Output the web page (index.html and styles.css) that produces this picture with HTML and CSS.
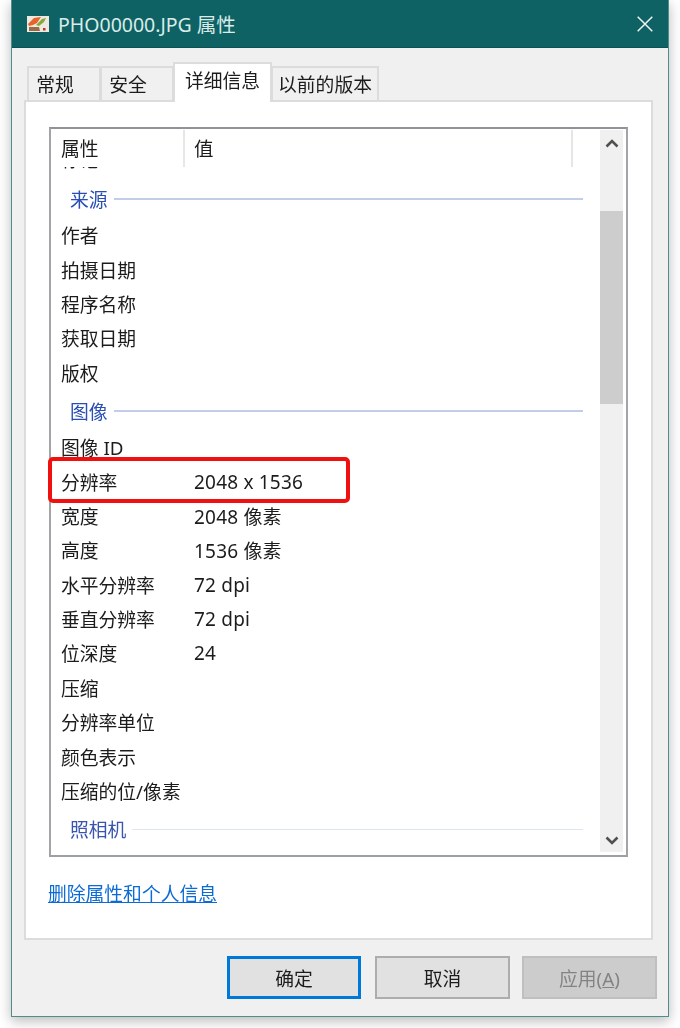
FILE: index.html
```html
<!DOCTYPE html>
<html lang="zh">
<head>
<meta charset="utf-8">
<title>PHO00000.JPG 属性</title>
<link rel="stylesheet" href="styles.css">
</head>
<body>
<div class="window">
  <header class="titlebar">
    <svg class="file-icon" width="22" height="16" viewBox="0 0 22 16">
      <rect width="22" height="16" fill="#eeeae0"/>
      <path d="M1 8 L7 2 L14 1 L10 7 L6 9 L2 10 Z" fill="#e8622c"/>
      <path d="M9 9 L15 3 L19 2 L17 6 L12 10 Z" fill="#84a93f"/>
      <path d="M2 11 L12 11 L13 15 L2 15 Z" fill="#9c6a45"/>
      <rect x="16" y="12" width="2.5" height="2.5" fill="#c4342c"/>
    </svg>
    <span class="title">PHO00000.JPG 属性</span>
    <svg class="close" width="16" height="16" viewBox="0 0 16 16">
      <path d="M0.7 0.7 L15.3 15.3 M15.3 0.7 L0.7 15.3" stroke="#eef5f4" stroke-width="1.5" fill="none"/>
    </svg>
  </header>
  <main class="content">
    <nav class="tabs">
      <div class="tab tab-side">常规</div>
      <div class="tab tab-side">安全</div>
      <div class="tab tab-active">详细信息</div>
      <div class="tab tab-d">以前的版本</div>
    </nav>
    <section class="panel">
      <div class="listbox">
        <div class="list">
          <div class="list-head">
            <div class="head-cell head-name">属性</div>
            <div class="head-cell head-value">值</div>
            <div class="head-cell head-rest"></div>
          </div>
          <div class="list-body">
            <div class="row row-clipped"><span class="name">标记</span></div>
            <div class="group"><span>来源</span><i></i></div>
            <div class="row"><span class="name">作者</span></div>
            <div class="row"><span class="name">拍摄日期</span></div>
            <div class="row"><span class="name">程序名称</span></div>
            <div class="row"><span class="name">获取日期</span></div>
            <div class="row"><span class="name">版权</span></div>
            <div class="group group-mid"><span>图像</span><i></i></div>
            <div class="row"><span class="name">图像 ID</span></div>
            <div class="row"><span class="name">分辨率</span><span class="value">2048 x 1536</span></div>
            <div class="row"><span class="name">宽度</span><span class="value">2048 像素</span></div>
            <div class="row"><span class="name">高度</span><span class="value">1536 像素</span></div>
            <div class="row"><span class="name">水平分辨率</span><span class="value">72 dpi</span></div>
            <div class="row"><span class="name">垂直分辨率</span><span class="value">72 dpi</span></div>
            <div class="row"><span class="name">位深度</span><span class="value">24</span></div>
            <div class="row"><span class="name">压缩</span></div>
            <div class="row"><span class="name">分辨率单位</span></div>
            <div class="row"><span class="name">颜色表示</span></div>
            <div class="row"><span class="name">压缩的位/像素</span></div>
            <div class="group group-mid group-faint"><span>照相机</span><i></i></div>
          </div>
        </div>
        <div class="scrollbar">
          <svg class="arrow" width="14" height="9" viewBox="0 0 14 9"><path d="M1.5 7.5 L7 2 L12.5 7.5" stroke="#505050" stroke-width="2.6" fill="none"/></svg>
          <div class="track"><div class="thumb"></div></div>
          <svg class="arrow arrow-down" width="14" height="9" viewBox="0 0 14 9"><path d="M1.5 1.5 L7 7 L12.5 1.5" stroke="#505050" stroke-width="2.6" fill="none"/></svg>
        </div>
        <div class="highlight"></div>
      </div>
      <a class="link" href="#">删除属性和个人信息</a>
    </section>
    <footer class="buttons">
      <button class="btn btn-default" type="button">确定</button>
      <button class="btn" type="button">取消</button>
      <button class="btn btn-disabled" type="button">应用(<u>A</u>)</button>
    </footer>
  </main>
</div>
</body>
</html>
```
FILE: styles.css
```css
* { box-sizing: border-box; }
html, body { margin: 0; height: 100%; }
body {
  width: 680px;
  height: 1028px;
  overflow: hidden;
  background: #ffffff;
  padding-left: 11px;
  font-family: "Noto Sans", "Noto Sans CJK SC", sans-serif;
  font-size: 18.8px;
  color: #1c1c1c;
}
.window {
  width: 658px;
  height: 1017px;
  display: flex;
  flex-direction: column;
  border: 1px solid #4d8f8d;
  border-top: 0;
  box-shadow: 0 4px 12px rgba(0, 0, 0, 0.28);
  background: #f0f0f0;
  filter: blur(0.35px);
}
.titlebar {
  height: 48px;
  flex: none;
  display: flex;
  align-items: center;
  padding: 0 15px 0 15px;
  background: #0e6263;
  color: #d9ecea;
  border-bottom: 1px solid #0a5253;
}
.file-icon { flex: none; }
.title { margin-left: 9px; font-size: 19.5px; }
.close { margin-left: auto; }
.content {
  flex: 1;
  display: flex;
  flex-direction: column;
  padding: 13px 15px 17px 12px;
  min-height: 0;
}
.tabs {
  display: flex;
  align-items: flex-end;
  height: 39px;
  padding-left: 3px;
  flex: none;
  position: relative;
  z-index: 1;
}
.tab {
  height: 34px;
  display: flex;
  align-items: center;
  justify-content: center;
  background: #f0f0f0;
  border: 2px solid #dcdcdc;
  border-bottom: 0;
  margin-right: -1px;
  white-space: nowrap;
}
.tab-side { width: 74px; padding-right: 18px; }
.tab-active {
  width: 99px;
  height: 40px;
  margin-bottom: -2px;
  padding-bottom: 6px;
  background: #fff;
  position: relative;
  z-index: 2;
}
.tab-d { width: 108px; }
.panel {
  flex: 1;
  min-height: 0;
  background: #fff;
  border: 2px solid #dcdcdc;
  padding: 25px 23px 0 23px;
}
.listbox {
  position: relative;
  height: 730px;
  display: flex;
  border: 2px solid #9c9fa3;
  border-color: #8f9296 #a2a4a7 #9c9fa3 #a2a4a7;
  padding: 1px 3px 3px 0;
}
.list {
  flex: 1;
  min-width: 0;
  display: flex;
  flex-direction: column;
}
.list-head {
  height: 37px;
  flex: none;
  display: flex;
}
.head-cell {
  padding: 0 0 2px 10px;
  display: flex;
  align-items: center;
  border-right: 2px solid #e6e6e6;
}
.head-name { width: 134px; }
.head-value { width: 388px; padding-left: 9px; font-size: 19.5px; }
.head-rest { flex: 1; border-right: 0; }
.list-body {
  flex: 1;
  min-height: 0;
  overflow: hidden;
}
.row {
  height: 34.4px;
  display: flex;
  align-items: center;
  padding-left: 10px;
  white-space: nowrap;
}
.row-clipped { margin-top: -27px; height: 40px; padding-bottom: 3px; }
.name { width: 133px; flex: none; }
.value { font-size: 19px; letter-spacing: 0.2px; }
.group {
  height: 38px;
  display: flex;
  align-items: center;
  padding-left: 19px;
  padding-right: 17px;
  gap: 6px;
  color: #2a4fb3;
  white-space: nowrap;
}
.group i {
  flex: 1;
  height: 1.5px;
  background: #c2cdeb;
}
.group-mid { margin-top: 2px; }
.group-faint { color: #3a55ad; }
.group-faint i { background: #dfe4f5; }
.scrollbar {
  width: 23px;
  flex: none;
  background: #f0f0f0;
  display: flex;
  flex-direction: column;
  align-items: center;
}
.arrow { flex: none; margin: 9px 0; }
.arrow-down { margin-bottom: 7px; }
.track { flex: 1; width: 100%; padding-top: 54px; }
.thumb { height: 193px; background: #cdcdcd; }
.highlight {
  position: absolute;
  left: -3px;
  top: 328px;
  width: 302px;
  height: 46px;
  border: 4px solid #f01010;
  border-radius: 5px;
}
.link {
  display: block;
  width: max-content;
  margin: 22px 0 0 -1px;
  color: #0c6bd6;
  text-decoration: underline;
}
.buttons {
  flex: none;
  height: 43px;
  margin: 16px -4px 0 0;
  display: flex;
  justify-content: flex-end;
  gap: 12px;
}
.btn {
  width: 135px;
  height: 43px;
  font: inherit;
  color: #1c1c1c;
  background: #e1e1e1;
  border: 2px solid #adadad;
  padding: 0;
}
.btn-default { width: 134px; border: 3px solid #0078d7; margin-right: 2px; }
.btn-disabled {
  background: #cccccc;
  border-color: #bfbfbf;
  color: #838383;
}
```
